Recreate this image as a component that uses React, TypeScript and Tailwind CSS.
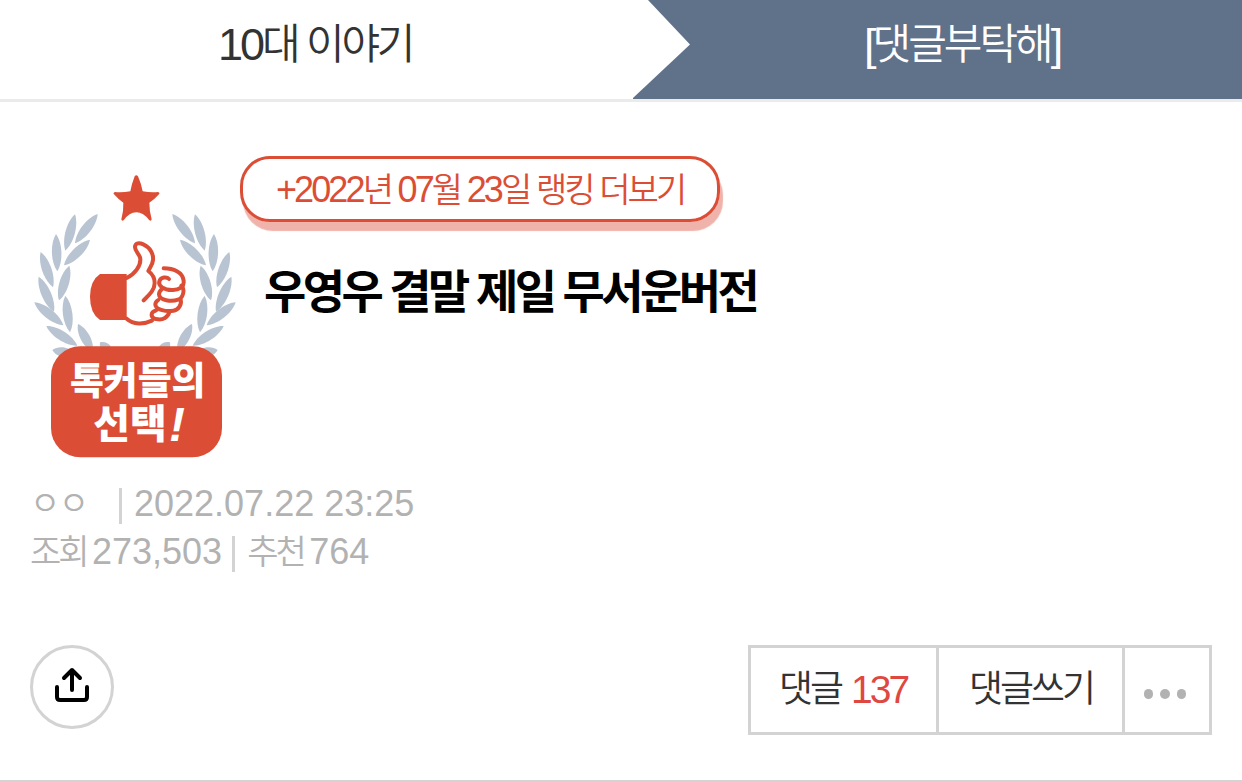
const KO = "font-['Liberation_Sans','Noto_Sans_CJK_KR',sans-serif]";

// Laurel leaves of the left branch: [tip x, tip y, base x, base y]
const leaves = [
  [165, 163, 136, 272],
  [233, 162, 165, 250],
  [108, 222, 112, 334],
  [210, 239, 132, 316],
  [62, 276, 99, 382],
  [148, 317, 117, 421],
  [56, 350, 102, 455],
  [136, 407, 150, 517],
  [43, 427, 130, 496],
  [79, 498, 172, 557],
  [174, 492, 218, 575],
  [97, 570, 165, 584],
  [240, 547, 275, 580],
];

// Leaf outline: two curves bulging to either side of the tip-base axis
function leafPath([x1, y1, x2, y2]: number[]) {
  const dx = x2 - x1;
  const dy = y2 - y1;
  const len = Math.hypot(dx, dy);
  const nx = (-dy / len) * 19;
  const ny = (dx / len) * 19;
  const ax = x1 + dx * 0.25;
  const ay = y1 + dy * 0.25;
  const bx = x1 + dx * 0.75;
  const by = y1 + dy * 0.75;
  return `M${x1} ${y1}C${ax + nx} ${ay + ny} ${bx + nx} ${by + ny} ${x2} ${y2}C${bx - nx} ${by - ny} ${ax - nx} ${ay - ny} ${x1} ${y1}Z`;
}

function Branch() {
  return (
    <>
      {leaves.map((leaf, i) => (
        <path key={i} d={leafPath(leaf)} />
      ))}
    </>
  );
}

// Round "talkers' choice" badge with laurel, star and thumb
function Emblem() {
  return (
    <svg width="220" height="310" viewBox="0 0 660 930" className="mt-1 shrink-0">
      <g fill="#b8c4d2">
        <Branch />
        <g transform="translate(690 0) scale(-1 1)">
          <Branch />
        </g>
      </g>
      <path
        fill="#db4e35"
        d="M344 49Q349 42 354 49Q364 72 368 94Q392 98 414 96Q421 98 417 103Q404 118 388 128Q388 154 395 178Q394 185 388 181Q370 157 349 157Q328 157 311 181Q305 185 304 178Q311 154 310 128Q295 118 282 103Q278 98 285 96Q307 98 331 94Q335 72 344 49Z"
      />
      <path fill="#db4e35" d="M320 342H240Q210 362 210 410Q210 460 240 480H320Z" />
      <g fill="none" stroke="#db4e35" strokeWidth="12" strokeLinecap="round" strokeLinejoin="round">
        <path d="M320 354C345 342 362 318 361 297C360 282 344 275 345 260C346 248 358 248 370 253C391 262 401 283 399 300C398 315 390 322 385 333C396 341 404 352 404 369C404 389 390 402 371 421" />
        <path d="M320 476C340 494 370 494 396 482" />
        <path d="M431 325C460 325 488 336 491 362C493 382 476 391 456 390C431 390 414 377 418 364C422 351 440 349 447 357" />
        <path d="M484 377C496 388 490 414 474 419C455 426 418 422 417 403C417 396 420 392 426 387" />
        <path d="M482 419C486 436 474 450 460 452C440 456 408 450 406 434C406 427 409 423 415 420" />
        <path d="M448 456C444 472 428 480 414 478C400 477 392 470 396 460C397 455 403 453 410 450" />
      </g>
      <rect x="93" y="559" width="513" height="333" rx="88" fill="#db4e35" />
      <g fill="#fff" className="font-['Noto_Sans_CJK_KR',sans-serif] font-black">
        <text x="150" y="702" fontSize="114" textLength="406" lengthAdjust="spacingAndGlyphs">
          톡커들의
        </text>
        <text x="220" y="833" fontSize="120" textLength="220" lengthAdjust="spacingAndGlyphs">
          선택
        </text>
        <text x="447" y="842" fontSize="144" className="font-['Liberation_Sans',sans-serif] font-bold italic">
          !
        </text>
      </g>
    </svg>
  );
}

function Header() {
  return (
    <header className="flex h-[102px] border-b-[3px] border-[#ebebeb] text-[45px] leading-none">
      <div className="flex w-[633px] pt-[22px] pl-[218px] text-[#333]">
        <span className="tracking-[-3px]">10</span>
        <span className="mt-0.5 text-[42px] font-[350] tracking-[-3.200px]">대 이야기</span>
      </div>
      <div className="flex flex-1 bg-[#60718a]">
        <svg width="57" height="99" viewBox="0 0 57 99" className="shrink-0">
          <path d="M0 0H15L57 44.500L0 98Z" fill="#fff" />
        </svg>
        <div className="flex pt-[22px] pl-[174px] text-white">
          <span className="tracking-[-4px]">[</span>
          <span className="mt-0.5 text-[42px] font-[350] tracking-[-3px]">댓글부탁해</span>
          <span>]</span>
        </div>
      </div>
    </header>
  );
}

function PostHead() {
  return (
    <section className="flex h-[368px] pt-[54px] pl-5">
      <Emblem />
      <div>
        <a className="flex h-[66px] w-[480px] items-baseline rounded-[30px] border-[3px] border-[#db4e35] pt-[11px] pl-[33px] text-[34px] leading-[40px] font-[350] tracking-[-2.900px] whitespace-pre text-[#db4e35] shadow-[3px_9px_1px_#f0b3ab]">
          <span className="text-[36px]">+2022</span>
          <span>년 </span>
          <span className="text-[36px]">07</span>
          <span>월 </span>
          <span className="text-[36px]">23</span>
          <span>일 랭킹 더보기</span>
        </a>
        <h1 className="mt-[43px] ml-6 text-[46px] leading-[54px] font-bold tracking-[-3.600px] whitespace-nowrap text-black">
          우영우 결말 제일 무서운버전
        </h1>
      </div>
    </section>
  );
}

function PostMeta() {
  return (
    <div className="flex h-[175px] flex-col pt-[10px] pl-[30px] text-[36px] leading-[48px] font-[350] text-[#b2b2b2]">
      <div className="flex items-center">
        <span className="w-[89px] text-[33px] tracking-[-1.500px]">ㅇㅇ</span>
        <i className="mt-1 h-9 w-[3px] bg-[#d3d3d3]" />
        <span className="ml-3">2022.07.22 23:25</span>
      </div>
      <div className="flex items-center">
        <span className="w-[62px] text-[34px] tracking-[-3px]">조회</span>
        <span>273,503</span>
        <i className="mt-1 ml-2.5 h-9 w-[3px] bg-[#d3d3d3]" />
        <span className="ml-3 w-[62px] text-[34px] tracking-[-3px]">추천</span>
        <span>764</span>
      </div>
    </div>
  );
}

function Actions() {
  return (
    <div className="flex justify-between px-[30px]">
      <button className="flex size-[84px] items-center justify-center rounded-full border-[3px] border-[#d3d3d3]">
        <svg width="36" height="36" viewBox="0 0 36 36" fill="none" stroke="#000" strokeWidth="4" strokeLinecap="round" strokeLinejoin="round" className="-mt-1">
          <path d="M18 23V3M10 11L18 3L26 11M3 20V30Q3 33 6 33H30Q33 33 33 30V20" />
        </svg>
      </button>
      <div className="flex h-[90px] w-[464px] divide-x-[3px] divide-[#d3d3d3] border-[3px] border-[#d3d3d3] text-[39px] leading-[84px] text-[#333]">
        <button className="flex w-[188px] pl-[28px]">
          <span className="w-[72px] text-left text-[37px] font-[350] tracking-[-3px]">댓글</span>
          <span className="tracking-[-3px] text-[#df4840]">137</span>
        </button>
        <button className="w-[186px] pl-[30px] text-left text-[37px] font-[350] tracking-[-3px]">댓글쓰기</button>
        <button className="flex flex-1 items-center justify-center gap-[7px] pt-2 pr-1">
          <i className="size-[9.500px] rounded-full bg-[#b2b2b2]" />
          <i className="size-[9.500px] rounded-full bg-[#b2b2b2]" />
          <i className="size-[9.500px] rounded-full bg-[#b2b2b2]" />
        </button>
      </div>
    </div>
  );
}

export default function App() {
  return (
    <div className={`h-[782px] w-[1242px] overflow-hidden border-b-2 border-[#d3d3d3] bg-white ${KO}`}>
      <Header />
      <PostHead />
      <PostMeta />
      <Actions />
    </div>
  );
}
